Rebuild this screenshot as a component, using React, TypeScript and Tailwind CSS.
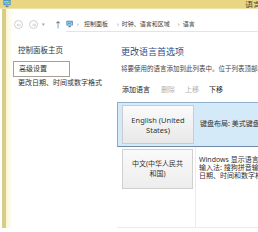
import React from 'react';

function PanelIcon({ className }: { className?: string }) {
  return (
    <svg viewBox="0 0 10 10" className={className}>
      <rect x="0.5" y="1" width="8" height="6" rx="0.8" fill="#3f86c8" />
      <rect x="1.5" y="2" width="6" height="4" fill="#9fd0f0" />
      <path d="M2 5.5 L3.5 3.5 L5 4.8 L7 2.6" stroke="#3aa640" strokeWidth="1" fill="none" />
      <rect x="3" y="7.4" width="3" height="1.6" fill="#6a7f93" />
    </svg>
  );
}

function NavCircle({ dir }: { dir: 'left' | 'right' }) {
  return (
    <div className="w-[9px] h-[9px] rounded-full border border-[#cfcfcf] flex items-center justify-center">
      <svg viewBox="0 0 8 8" className="w-[6px] h-[6px]">
        {dir === 'left' ? (
          <path d="M6.5 4 H1.8 M3.8 2 L1.8 4 L3.8 6" stroke="#c4c4c4" strokeWidth="1" fill="none" />
        ) : (
          <path d="M1.5 4 H6.2 M4.2 2 L6.2 4 L4.2 6" stroke="#c4c4c4" strokeWidth="1" fill="none" />
        )}
      </svg>
    </div>
  );
}

export default function App() {
  return (
    <div className="w-[258px] h-[232px] bg-white overflow-hidden flex flex-col font-['Noto_Sans','Noto_Sans_CJK_SC',sans-serif] text-[#333]">
      {/* Title bar */}
      <div className="h-[9px] shrink-0 bg-[#e8d682] border-b border-[#efe3ad] flex items-start justify-between overflow-hidden">
        <PanelIcon className="w-[9px] h-[9px] ml-[3px] -mt-[1px]" />
        <span className="text-[8px] leading-[9px] text-[#3a3a3a] mr-[-3px] font-['Noto_Sans_CJK_SC',sans-serif]">语言</span>
      </div>

      <div className="flex h-[219px] shrink-0">
        {/* Window frame */}
        <div className="w-[2px] bg-white" />
        <div className="w-[4px] bg-[#d8cd88]" />
        <div className="w-[7px] bg-gradient-to-r from-[#fbf5d2] to-white" />

        <div className="flex-1 flex flex-col min-w-0">
          {/* Address row */}
          <div className="h-[31px] shrink-0 flex items-center">
            <div className="flex items-center gap-[6px] pl-[1px]">
              <NavCircle dir="left" />
              <NavCircle dir="right" />
            </div>
            <span className="ml-[4px] text-[5px] text-[#9a9a9a]">▾</span>
            <span className="ml-[9px] text-[8px] leading-none text-[#555]">↑</span>
            <div className="ml-[4px] flex-1 min-w-0 overflow-hidden h-[15px] border-b border-[#e4e4e4] flex items-center gap-[3px] text-[6px] leading-none text-[#444] whitespace-nowrap">
              <PanelIcon className="w-[8px] h-[8px] shrink-0" />
              <span className="text-[#777]">›</span>
              <span className="ml-[2px]">控制面板</span>
              <span className="text-[#777] ml-[6px]">›</span>
              <span>时钟、语言和区域</span>
              <span className="text-[#777] ml-[5px]">›</span>
              <span>语言</span>
            </div>
          </div>

          {/* Body */}
          <div className="flex-1 flex min-h-0">
            {/* Left nav */}
            <div className="w-[104px] shrink-0 flex flex-col text-[7px] leading-[10px] text-[#333] whitespace-nowrap">
              <div className="mt-[5px] pl-[5px] text-[7.5px]">控制面板主页</div>
              <div className="mt-[6px] w-[57px] h-[16px] border border-[#a59f98] pl-[5px] flex items-center">高级设置</div>
              <div className="mt-[1px] pl-[5px]">更改日期、时间或数字格式</div>
            </div>

            {/* Main */}
            <div className="flex-1 flex flex-col min-w-0 overflow-hidden">
              <div className="mt-[6px] pl-[4px] text-[9px] leading-[12px] text-[#2d4c86] whitespace-nowrap">更改语言首选项</div>
              <div className="mt-[6px] pl-[4px] text-[6.5px] leading-[10px] text-[#444] whitespace-nowrap overflow-hidden">将要使用的语言添加到此列表中。位于列表顶部的语言是你的主要语言</div>
              <div className="mt-[11px] pl-[5px] flex items-center text-[7px] leading-[10px] whitespace-nowrap">
                <span className="text-[#222]">添加语言</span>
                <span className="ml-[11px] text-[#b0b0b0]">删除</span>
                <span className="ml-[10px] text-[#b0b0b0]">上移</span>
                <span className="ml-[10px] text-[#222]">下移</span>
              </div>

              {/* Language list */}
              <div className="mt-[7px] flex-1 flex flex-col border-b border-[#ececec]">
                <div className="h-[45px] shrink-0 flex bg-[#d5eaf8] border border-[#8eb0cc] border-b-[#6f8aa6] border-r-0">
                  <div className="w-[79px] shrink-0 py-[2px] pl-[4px] pr-[3px]">
                    <div className="h-full border border-[#c9cdd1] bg-gradient-to-b from-[#fbfbfb] to-[#e8e8e8] flex items-center justify-center text-center text-[7.5px] leading-[10px] text-[#333]">
                      English (United<br />States)
                    </div>
                  </div>
                  <div className="flex-1 min-w-0 overflow-hidden pl-[3px] flex items-center text-[7px] text-[#333] whitespace-nowrap">键盘布局: 美式键盘</div>
                </div>
                <div className="h-[43px] shrink-0 flex">
                  <div className="w-[79px] shrink-0 pt-[2px] pb-[1px] pl-[5px] pr-[2px] border-r border-[#ececec]">
                    <div className="h-full border border-[#d0d0d0] bg-gradient-to-b from-[#fafafa] to-[#ededed] flex items-center justify-center text-center text-[7px] leading-[10px] text-[#333]">
                      中文(中华人民共<br />和国)
                    </div>
                  </div>
                  <div className="flex-1 min-w-0 overflow-hidden pt-[9px] pl-[3px] text-[7px] leading-[8px] text-[#333] whitespace-nowrap">
                    <div>Windows 显示语言: 已启用</div>
                    <div>输入法: 搜狗拼音输入法</div>
                    <div>日期、时间和数字格式</div>
                  </div>
                </div>
                <div className="flex-1 flex">
                  <div className="w-[79px] shrink-0 border-r border-[#ececec]" />
                </div>
              </div>
            </div>
          </div>
        </div>
      </div>
      <div className="flex-1 bg-white" />
    </div>
  );
}
